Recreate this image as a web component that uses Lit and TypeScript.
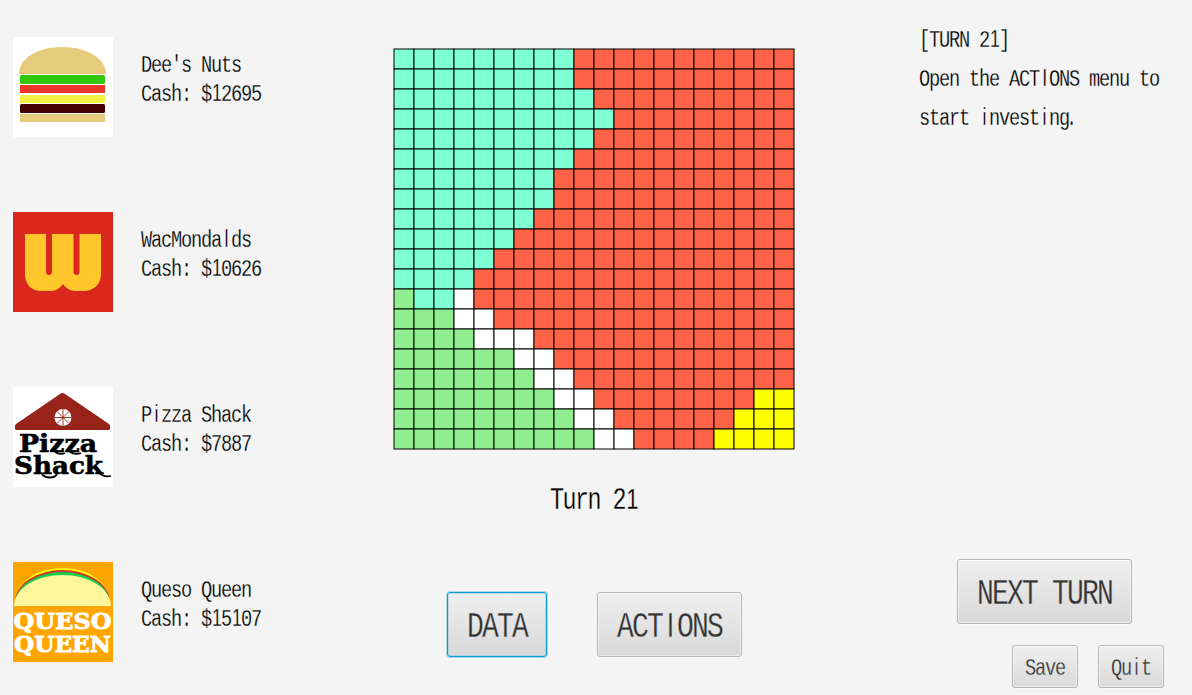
import { LitElement, html, svg, css } from "lit";
import { customElement, property } from "lit/decorators.js";

/** Narrow fixed-pitch label: every glyph sits in a cell that is `pitch` pixels wide. */
@customElement("pitch-text")
class PitchText extends LitElement {
  @property() text = "";
  @property({ type: Number }) pitch = 10;

  static styles = css`
    :host { display: block; flex: none; }
    .line { display: block; overflow: visible; }
    .mono {
      font-family: "Liberation Mono", monospace;
      text-anchor: middle;
      white-space: pre;
      fill: currentColor;
      stroke: var(--surface, #f4f4f4);
      stroke-width: 0.25px;
    }
    .plain { font-family: "Liberation Sans", sans-serif; }
  `;

  render() {
    const p = this.pitch;
    const size = p * 2.46;
    const squeeze = 0.76;
    const runs = this.text.match(/[iIl1.]|[^iIl1.]+/g) ?? [];
    let at = 0;
    const spans = runs.map((run) => {
      const plain = /^[iIl1]$/.test(run);
      const shift = run === "." ? 0.25 : run === "1" ? 0.6 : 0.56;
      const xs = [...run].map((_, k) => ((at + k + shift) * p) / squeeze).join(" ");
      at += run.length;
      return svg`<tspan class=${plain ? "plain" : ""} font-size=${plain ? size * 0.95 : size} x=${xs}>${run}</tspan>`;
    });
    return html`<svg class="line" width=${this.text.length * p} height=${p * 2}>
      <text class="mono" y=${p * 1.82} transform="scale(${squeeze} 1)">${spans}</text>
    </svg>`;
  }
}

const burger = svg`
  <rect width="100" height="100" fill="#fff"/>
  <path d="M6 37C6 21 25 10 49 10S93 21 93 37Z" fill="#e6cb7c"/>
  <rect x="7" y="38" width="85" height="9" rx="1.5" fill="#32c80a"/>
  <rect x="7" y="48" width="85" height="8" fill="#ee362a"/>
  <rect x="7" y="58" width="85" height="8" fill="#f3f145"/>
  <rect x="7" y="67" width="85" height="9" rx="1.5" fill="#440000"/>
  <rect x="7" y="77" width="85" height="8" fill="#e6cb7c"/>`;

const wac = svg`
  <rect width="100" height="100" fill="#da291c"/>
  <path d="M12 22H33V60Q33 63 36 63T39 60V22H60.500V60Q60.500 63 63.500 63T66.500 60V22H88V62C88 73 80 79 70 79H62C57 79 53 76 50 72C47 76 43 79 38 79H28C19 79 12 73 12 62Z" fill="#ffc72c"/>`;

const pizza = svg`
  <rect width="100" height="100" fill="#fff"/>
  <path d="M49.500 6Q51 6 52 7L96 37Q97 38 97 39V41.500Q97 43 95.500 43H3.500Q2 43 2 41.500V39Q2 38 3 37L47 7Q48 6 49.500 6Z" fill="#98231a"/>
  <circle cx="50" cy="30.500" r="8.500" fill="#fff"/>
  <path d="M50 22V39M41.500 30.500H58.500M44 24.500L56 36.500M56 24.500L44 36.500" stroke="#98231a" stroke-width="0.9"/>
  <text class="shack" x="6" y="64.500" textLength="78" lengthAdjust="spacingAndGlyphs">Pizza</text>
  <text class="shack" x="1" y="86.500" textLength="89" lengthAdjust="spacingAndGlyphs">Shack</text>
  <path d="M29 87Q31 90.500 37 90.500Q43 90.500 44 86M42 65Q47 68 52 66M57 65Q62 68 68 66M84 84Q90 91 98 89" fill="none" stroke="#000" stroke-width="1.800"/>`;

const queso = svg`
  <rect width="100" height="100" fill="#ffa500"/>
  <path d="M2 40A47.500 34 0 0 1 97 40Z" fill="#ffff00"/>
  <path d="M2 40A47.500 32 0 0 1 97 40Z" fill="#d2322d"/>
  <path d="M2 42A47.500 32 0 0 1 97 42Z" fill="#18cf4c"/>
  <path d="M1 44A48.500 31 0 0 1 98 44Z" fill="#fff59b"/>
  <text class="queen" x="0.500" y="66.500" textLength="98" lengthAdjust="spacingAndGlyphs">QUESO</text>
  <text class="queen" x="1" y="89.500" textLength="97" lengthAdjust="spacingAndGlyphs">QUEEN</text>`;

const players = [
  { name: "Dee's Nuts", cash: 12695, logo: burger },
  { name: "WacMondalds", cash: 10626, logo: wac },
  { name: "Pizza Shack", cash: 7887, logo: pizza },
  { name: "Queso Queen", cash: 15107, logo: queso },
];

const fills: Record<string, string> = {
  a: "#7fffd4", r: "#ff6347", g: "#90ee90", w: "#ffffff", y: "#ffff00",
};

// Each row lists owner runs as [owner, cells].
const rows: [string, number][][] = [
  [["a", 9], ["r", 11]],
  [["a", 9], ["r", 11]],
  [["a", 10], ["r", 10]],
  [["a", 11], ["r", 9]],
  [["a", 10], ["r", 10]],
  [["a", 9], ["r", 11]],
  [["a", 8], ["r", 12]],
  [["a", 8], ["r", 12]],
  [["a", 7], ["r", 13]],
  [["a", 6], ["r", 14]],
  [["a", 5], ["r", 15]],
  [["a", 4], ["r", 16]],
  [["g", 1], ["a", 2], ["w", 1], ["r", 16]],
  [["g", 3], ["w", 2], ["r", 15]],
  [["g", 4], ["w", 3], ["r", 13]],
  [["g", 6], ["w", 2], ["r", 12]],
  [["g", 7], ["w", 2], ["r", 11]],
  [["g", 8], ["w", 2], ["r", 8], ["y", 2]],
  [["g", 9], ["w", 2], ["r", 6], ["y", 3]],
  [["g", 10], ["w", 2], ["r", 4], ["y", 4]],
];

@customElement("app-root")
class AppRoot extends LitElement {
  static styles = css`
    :host {
      display: grid;
      grid-template-columns: 393px 402px 1fr;
      box-sizing: border-box;
      width: 1192px;
      height: 695px;
      overflow: hidden;
      background: #f4f4f4;
      color: #000;
    }
    .players { display: flex; flex-direction: column; gap: 75px; padding: 37px 0 0 13px; }
    .player { display: flex; gap: 28px; height: 100px; }
    .logo { display: block; flex: none; }
    .facts { display: flex; flex-direction: column; gap: 9px; padding-top: 17px; }
    .shack { font: 700 24px "DejaVu Serif", serif; fill: #000; stroke: #000; stroke-width: 0.6; }
    .queen { font: 700 21.5px "DejaVu Serif", serif; fill: #fff; stroke: #fff; stroke-width: 0.8; }
    .middle { display: flex; flex-direction: column; align-items: center; padding-top: 48px; }
    .board { display: block; flex: none; }
    .turn { margin-top: 36px; }
    .menu { display: flex; gap: 50px; margin-top: 81px; }
    .side { display: flex; flex-direction: column; }
    .log { display: flex; flex-direction: column; gap: 19px; padding: 29px 0 0 124px; height: 530px; box-sizing: border-box; }
    .controls { display: flex; flex-direction: column; align-items: flex-end; gap: 21px; padding: 29px 28px 0 0; }
    .pair { display: flex; gap: 20px; }
    .button {
      --surface: #e2e2e2;
      box-sizing: border-box;
      flex: none;
      margin: 0;
      border: 1px solid #b5b5b5;
      border-radius: 3px;
      background: linear-gradient(#efefef, #d9d9d9);
      box-shadow: inset 0 0 0 1px rgba(255, 255, 255, 0.5), inset 0 1px 0 #fbfbfb, 0 1px 0 #fafafa;
      color: #333;
      height: 65px;
      padding: 1px 19px 0;
      text-align: left;
      display: block;
    }
    .next { margin-right: 32px; }
    .small { height: 43px; padding: 1px 12px 0; }
    .focused { border-color: #039ed3; box-shadow: 0 0 0 1px rgba(3, 158, 211, 0.3), inset 0 0 0 1px rgba(3, 158, 211, 0.2); }
  `;

  private board() {
    const cells = rows.flatMap((runs, r) =>
      runs.flatMap(([owner, n]) => Array<string>(n).fill(owner)).map(
        (owner, c) => svg`<rect x=${1 + c * 20} y=${1 + r * 20} width="20" height="20" fill=${fills[owner]} stroke="#000"/>`
      )
    );
    return html`<svg class="board" width="402" height="402">${cells}</svg>`;
  }

  render() {
    return html`
      <div class="players">
        ${players.map((p) => html`
          <div class="player">
            <svg class="logo" width="100" height="100" viewBox="0 0 100 100">${p.logo}</svg>
            <div class="facts">
              <pitch-text .text=${p.name}></pitch-text>
              <pitch-text .text=${`Cash: $${p.cash}`}></pitch-text>
            </div>
          </div>`)}
      </div>
      <div class="middle">
        ${this.board()}
        <pitch-text class="turn" pitch="12.5" text="Turn 21"></pitch-text>
        <div class="menu">
          <button class="button focused"><pitch-text pitch="15" text="DATA"></pitch-text></button>
          <button class="button"><pitch-text pitch="15" text="ACTIONS"></pitch-text></button>
        </div>
      </div>
      <div class="side">
        <div class="log">
          <pitch-text text="[TURN 21]"></pitch-text>
          <pitch-text text="Open the ACTIONS menu to"></pitch-text>
          <pitch-text text="start investing."></pitch-text>
        </div>
        <div class="controls">
          <button class="button next"><pitch-text pitch="15" text="NEXT TURN"></pitch-text></button>
          <div class="pair">
            <button class="button small"><pitch-text text="Save"></pitch-text></button>
            <button class="button small"><pitch-text text="Quit"></pitch-text></button>
          </div>
        </div>
      </div>`;
  }
}
